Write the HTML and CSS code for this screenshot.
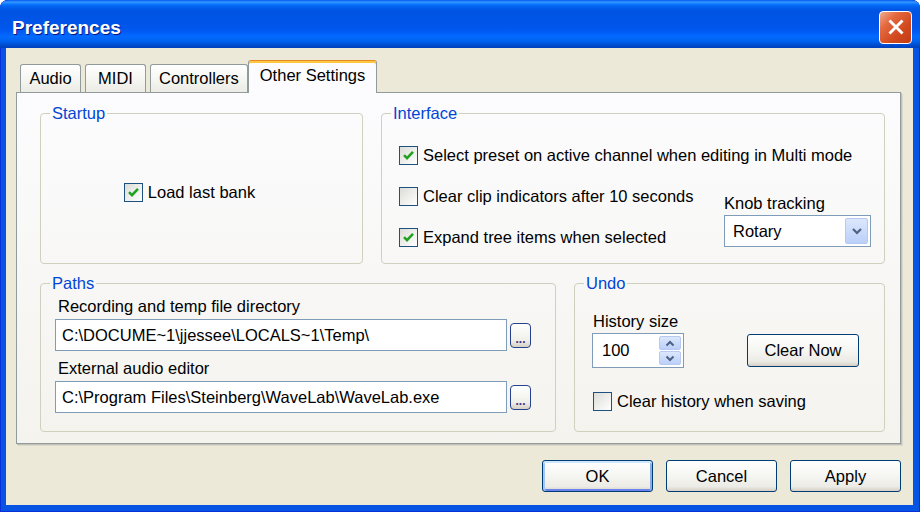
FILE: index.html
```html
<!DOCTYPE html>
<html lang="en">
<head>
    <meta charset="UTF-8">
    <title>Preferences</title>
    <link rel="stylesheet" href="styles.css">
</head>
<body>
    <div class="window">
        <div class="titlebar">
            <span class="title">Preferences</span>
            <span class="close">
                <svg width="22" height="22" viewBox="0 0 20 20"><path d="M5 5L15 15M15 5L5 15" stroke="#fff" stroke-width="2.6" stroke-linecap="square"/></svg>
            </span>
        </div>

        <div class="client">
            <div class="tabs">
                <div class="tab">Audio</div>
                <div class="tab">MIDI</div>
                <div class="tab">Controllers</div>
                <div class="tab active">Other Settings</div>
            </div>

            <div class="panel">
                <div class="row">
                    <fieldset class="group startup">
                        <legend>Startup</legend>
                        <div class="group-body startup-body">
                            <label class="check"><span class="box"><svg width="15" height="15" viewBox="0 0 15 15"><path d="M3 7.2L6 10.2L12 3.8" fill="none" stroke="#21A121" stroke-width="2.5"/></svg></span>Load last bank</label>
                        </div>
                    </fieldset>

                    <fieldset class="group interface">
                        <legend>Interface</legend>
                        <div class="group-body interface-body">
                            <label class="check wide"><span class="box"><svg width="15" height="15" viewBox="0 0 15 15"><path d="M3 7.2L6 10.2L12 3.8" fill="none" stroke="#21A121" stroke-width="2.5"/></svg></span>Select preset on active channel when editing in Multi mode</label>
                            <label class="check"><span class="box"></span>Clear clip indicators after 10 seconds</label>
                            <label class="check"><span class="box"><svg width="15" height="15" viewBox="0 0 15 15"><path d="M3 7.2L6 10.2L12 3.8" fill="none" stroke="#21A121" stroke-width="2.5"/></svg></span>Expand tree items when selected</label>
                            <div class="knob">
                                <span class="knob-label">Knob tracking</span>
                                <div class="select">
                                    <span>Rotary</span>
                                    <span class="select-btn"><svg width="12" height="10" viewBox="0 0 12 10"><path d="M2 3L6 7L10 3" fill="none" stroke="#4D6185" stroke-width="2.2"/></svg></span>
                                </div>
                            </div>
                        </div>
                    </fieldset>
                </div>

                <div class="row">
                    <fieldset class="group paths">
                        <legend>Paths</legend>
                        <div class="group-body paths-body">
                            <div class="field-label">Recording and temp file directory</div>
                            <div class="field">
                                <div class="input">C:\DOCUME~1\jjessee\LOCALS~1\Temp\</div>
                                <span class="browse">...</span>
                            </div>
                            <div class="field-label">External audio editor</div>
                            <div class="field">
                                <div class="input">C:\Program Files\Steinberg\WaveLab\WaveLab.exe</div>
                                <span class="browse">...</span>
                            </div>
                        </div>
                    </fieldset>

                    <fieldset class="group undo">
                        <legend>Undo</legend>
                        <div class="group-body undo-body">
                            <div class="undo-top">
                                <div class="spin-col">
                                    <span class="spin-label">History size</span>
                                    <div class="spinner">
                                        <span class="spin-value">100</span>
                                        <span class="spin-btns">
                                            <span class="spin-btn"><svg width="10" height="7" viewBox="0 0 10 7"><path d="M1.5 5.5L5 2L8.5 5.5" fill="none" stroke="#4D6185" stroke-width="2"/></svg></span>
                                            <span class="spin-btn"><svg width="10" height="7" viewBox="0 0 10 7"><path d="M1.5 1.5L5 5L8.5 1.5" fill="none" stroke="#4D6185" stroke-width="2"/></svg></span>
                                        </span>
                                    </div>
                                </div>
                                <button class="btn clear-now">Clear Now</button>
                            </div>
                            <label class="check"><span class="box"></span>Clear history when saving</label>
                        </div>
                    </fieldset>
                </div>
            </div>

            <div class="actions">
                <button class="btn default">OK</button>
                <button class="btn">Cancel</button>
                <button class="btn">Apply</button>
            </div>
        </div>
    </div>
</body>
</html>
```

FILE: styles.css
```css
* {
    margin: 0;
    padding: 0;
    box-sizing: border-box;
}

body {
    background: #fff;
    font-family: 'Liberation Sans', Arial, sans-serif;
    font-size: 16.5px;
    color: #000;
}

.window {
    width: 920px;
    height: 512px;
    display: flex;
    flex-direction: column;
    background: #0554E4;
    border-radius: 8px 8px 0 0;
    box-shadow: inset 0 0 0 1px #0831D9;
    overflow: hidden;
}

.titlebar {
    height: 48px;
    flex: none;
    display: flex;
    align-items: center;
    justify-content: space-between;
    padding: 6px 8px 0 12px;
    border-radius: 8px 8px 0 0;
    background: linear-gradient(to bottom, #0058EE 0%, #3593FF 4%, #288EFF 6%, #127DFF 8%, #036FFC 10%, #0262EE 14%, #0057E5 20%, #0054E3 24%, #0055EB 56%, #005BF5 66%, #026AFE 76%, #0062EF 86%, #0052D6 92%, #0046C8 96%, #0040B8 100%);
}

.title {
    color: #fff;
    font-weight: bold;
    font-size: 19px;
    padding-top: 2px;
    text-shadow: 1px 1px 0 #0A1883;
}

.close {
    width: 33px;
    height: 33px;
    border: 1px solid #fff;
    border-radius: 4px;
    background: linear-gradient(135deg, #F2AC90 0%, #E3693F 30%, #D2491F 65%, #C23B14 100%);
    display: flex;
    align-items: center;
    justify-content: center;
}

.client {
    flex: 1;
    margin: 0 7px 7px 6px;
    background: #ECE9D8;
    padding: 12px 12px 0 10px;
}

/* tabs */
.tabs {
    height: 32px;
    display: flex;
    align-items: flex-end;
    padding-left: 4px;
}

.tab {
    height: 28px;
    min-width: 61px;
    padding: 0 8px;
    margin-right: 4px;
    border: 1px solid #919B9C;
    border-bottom: none;
    border-radius: 3px 3px 0 0;
    background: linear-gradient(to bottom, #FFFFFF, #F4F4F0 60%, #ECEBE5);
    display: flex;
    align-items: center;
    justify-content: center;
}

.tab.active {
    height: 33px;
    margin-left: -4px;
    margin-bottom: -1px;
    padding: 0 11px 3px;
    position: relative;
    z-index: 1;
    background: #FCFCFE;
    border-top-color: #E68B2C;
    box-shadow: inset 0 2px 0 #FFC83C;
}

.panel {
    height: 352px;
    border: 1px solid #919B9C;
    background: linear-gradient(to bottom, #FCFCFE, #F4F3EE);
    box-shadow: 1px 1px 0 #C2C0B4, 2px 2px 0 #DCD9CC;
    padding: 11px 14px 11px 23px;
    display: flex;
    flex-direction: column;
    gap: 10px;
}

.row {
    display: flex;
    gap: 18px;
}

/* group boxes */
.group {
    border: 1px solid #D0D0BF;
    border-radius: 4px;
    min-width: 0;
}

.group legend {
    margin-left: 9px;
    padding: 0 2px;
    color: #0046D5;
    line-height: 18px;
}

.startup { width: 323px; }
.interface { width: 504px; }
.paths { width: 516px; }
.undo { width: 311px; }

.row:first-child .group-body { height: 141px; }
.row:last-child .group-body { height: 139px; }

.check {
    display: flex;
    align-items: center;
    gap: 5px;
    height: 20px;
    white-space: nowrap;
}

.box {
    width: 19px;
    height: 19px;
    flex: none;
    border: 1px solid #1C5180;
    background: linear-gradient(135deg, #DCDCD7, #FFFFFF);
    display: flex;
    align-items: center;
    justify-content: center;
}

.startup-body {
    display: flex;
    align-items: center;
    justify-content: center;
    padding-right: 24px;
}

.interface-body {
    display: grid;
    grid-template-columns: 1fr 147px;
    grid-template-rows: 20px 20px 20px;
    row-gap: 21px;
    padding: 23px 13px 0 17px;
}

.check.wide {
    grid-column: 1 / -1;
}

.knob {
    grid-column: 2;
    grid-row: 2 / 4;
    align-self: end;
    display: flex;
    flex-direction: column;
    gap: 3px;
}

.knob-label {
    line-height: 18px;
}

.select {
    height: 32px;
    border: 1px solid #7F9DB9;
    background: #fff;
    display: flex;
    align-items: center;
    justify-content: space-between;
    padding: 2px 2px 2px 8px;
}

.select-btn {
    width: 23px;
    height: 100%;
    border: 1px solid #B6C9F2;
    border-radius: 2px;
    background: linear-gradient(to bottom, #DCE7FD, #BBCFF9);
    display: flex;
    align-items: center;
    justify-content: center;
}

/* paths */
.paths-body {
    padding: 5px 0 0 14px;
}

.field-label {
    line-height: 18px;
    padding-left: 3px;
    margin-bottom: 4px;
}

.field {
    display: flex;
    align-items: center;
    gap: 3px;
    margin-bottom: 8px;
}

.input {
    width: 452px;
    height: 32px;
    border: 1px solid #7F9DB9;
    background: #fff;
    padding-left: 6px;
    display: flex;
    align-items: center;
    white-space: nowrap;
}

.browse {
    width: 21px;
    height: 25px;
    border: 1px solid #26418F;
    border-radius: 4px;
    background: linear-gradient(to bottom, #FFFFFF, #F0F0EA 70%, #D6D0C5);
    display: flex;
    align-items: flex-end;
    justify-content: center;
    font-size: 12px;
    font-weight: bold;
    line-height: 1;
    padding-bottom: 2px;
    color: #4A2F8A;
}

/* undo */
.undo-body {
    padding: 20px 0 0 17px;
}

.undo-top {
    display: flex;
    align-items: flex-end;
    margin-bottom: 23px;
}

.spin-col {
    display: flex;
    flex-direction: column;
    gap: 3px;
}

.spin-label {
    line-height: 18px;
    padding-left: 1px;
}

.spinner {
    width: 92px;
    height: 35px;
    border: 1px solid #7F9DB9;
    background: #fff;
    display: flex;
    justify-content: space-between;
    padding: 2px;
}

.spin-value {
    padding-left: 7px;
    align-self: center;
}

.spin-btns {
    width: 22px;
    display: flex;
    flex-direction: column;
    gap: 1px;
}

.spin-btn {
    flex: 1;
    border: 1px solid #B6C9F2;
    border-radius: 2px;
    background: linear-gradient(to bottom, #DCE7FD, #BBCFF9);
    display: flex;
    align-items: center;
    justify-content: center;
}

.undo .check {
    padding-left: 1px;
}

/* buttons */
.btn {
    width: 111px;
    height: 32px;
    border: 1px solid #003C74;
    border-radius: 3px;
    background: linear-gradient(to bottom, #FFFFFF, #F4F4F0 55%, #ECEBE6 85%, #D6D0C5);
    font-family: inherit;
    font-size: 16.5px;
    color: #000;
}

.clear-now {
    width: 112px;
    height: 33px;
    margin-left: 63px;
    margin-bottom: 1px;
}

.actions {
    display: flex;
    justify-content: flex-end;
    gap: 13px;
    margin-top: 16px;
}

.btn.default {
    box-shadow: inset 0 2px 0 #CEE7FF, inset 2px 0 0 #A4C3F6, inset -2px 0 0 #89ADE4, inset 0 -2px 0 #6982EE;
}
```
